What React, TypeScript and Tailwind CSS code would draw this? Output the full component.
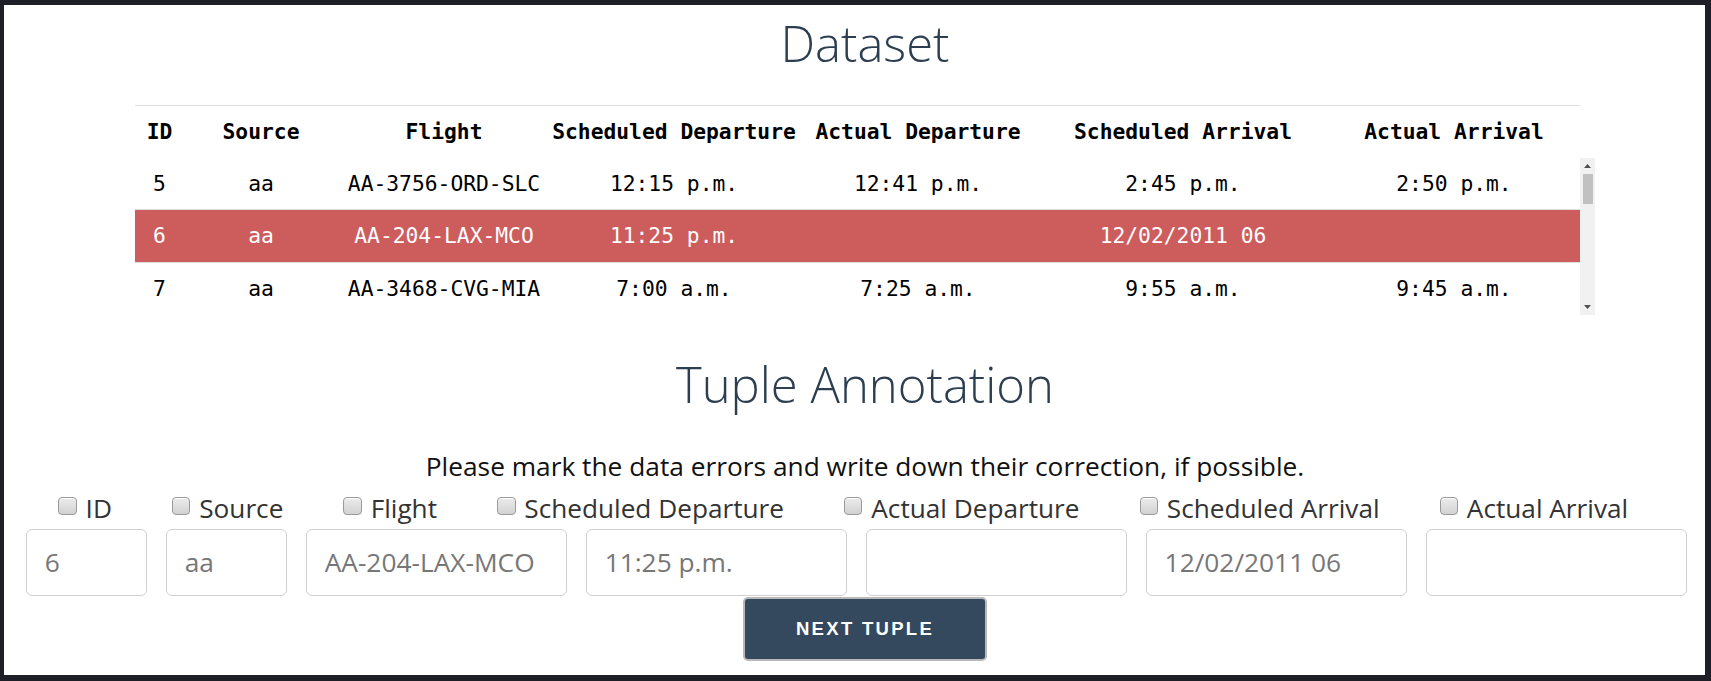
import clsx from "clsx"

const headers = [
  "ID",
  "Source",
  "Flight",
  "Scheduled Departure",
  "Actual Departure",
  "Scheduled Arrival",
  "Actual Arrival",
]

const rows = [
  { cells: ["5", "aa", "AA-3756-ORD-SLC", "12:15 p.m.", "12:41 p.m.", "2:45 p.m.", "2:50 p.m."], active: false },
  { cells: ["6", "aa", "AA-204-LAX-MCO", "11:25 p.m.", "", "12/02/2011 06", ""], active: true },
  { cells: ["7", "aa", "AA-3468-CVG-MIA", "7:00 a.m.", "7:25 a.m.", "9:55 a.m.", "9:45 a.m."], active: false },
]

const fields = [
  { label: "ID", value: "6", wide: false },
  { label: "Source", value: "aa", wide: false },
  { label: "Flight", value: "AA-204-LAX-MCO", wide: true },
  { label: "Scheduled Departure", value: "11:25 p.m.", wide: true },
  { label: "Actual Departure", value: "", wide: true },
  { label: "Scheduled Arrival", value: "12/02/2011 06", wide: true },
  { label: "Actual Arrival", value: "", wide: true },
]

const cols = "grid grid-cols-[49px_154px_212px_248px_240px_290px_252px] items-center"

function ScrollArrow({ down }: { down?: boolean }) {
  return (
    <div className="h-[16px] w-full flex items-center justify-center">
      <svg width="7" height="4" viewBox="0 0 7 4">
        <path d={down ? "M0 0H7L3.5 4Z" : "M3.5 0L7 4H0Z"} fill="#505050" />
      </svg>
    </div>
  )
}

export default function App() {
  return (
    <div className="h-[681px] w-full bg-[#1d1e26] pt-[5px] pl-[4px] pr-[6px] pb-[6px]">
      <div className="h-full bg-white font-['Open_Sans',sans-serif] overflow-hidden">
        <div className="ml-[131px] w-[1460px]">
          <h1 className="pt-[13.5px] text-center text-[49px] leading-[49px] font-light text-[#2c3e50]">Dataset</h1>

          <div className="mt-[37.5px] font-['DejaVu_Sans_Mono',monospace] text-[21.3px] text-black">
            <div className={clsx(cols, "w-[1445px] h-[53px] border-t border-[#dddddd] font-bold")}>
              {headers.map((h) => (
                <div key={h} className="text-center whitespace-nowrap">{h}</div>
              ))}
            </div>
            <div className="flex h-[157px]">
              <div className="w-[1445px]">
                {rows.map((row, i) => (
                  <div
                    key={i}
                    className={clsx(
                      cols,
                      i === 0 ? "h-[51px]" : "h-[53px] border-t border-[#dddddd]",
                      row.active && "bg-[#cd5c5c] text-white"
                    )}
                  >
                    {row.cells.map((c, j) => (
                      <div key={j} className="text-center whitespace-nowrap">{c}</div>
                    ))}
                  </div>
                ))}
              </div>
              <div className="w-[15px] bg-[#f1f1f1] flex flex-col items-center">
                <ScrollArrow />
                <div className="w-[10px] h-[30px] bg-[#c1c1c1]" />
                <div className="flex-1" />
                <ScrollArrow down />
              </div>
            </div>
          </div>

          <h2 className="mt-[44.75px] text-center text-[49px] leading-[49px] font-light text-[#2c3e50]">Tuple Annotation</h2>
          <p className="mt-[39.65px] text-center text-[26.3px] leading-[36px] text-[#111]">
            Please mark the data errors and write down their correction, if possible.
          </p>
        </div>

        <div className="mt-[5.65px] pl-[54.3px] flex gap-[60px] text-[26.2px] leading-[36px] text-[#333]">
          {fields.map((f) => (
            <label key={f.label} className="flex items-center gap-[8.8px] whitespace-nowrap">
              <input
                type="checkbox"
                className="appearance-none mb-[4px] w-[18.5px] h-[18.5px] rounded-[4px] border border-[#9a9a9a] bg-gradient-to-b from-[#ececec] to-[#d2d2d2] shadow-[inset_0_1px_0_#ffffff]"
              />
              <span>{f.label}</span>
            </label>
          ))}
        </div>

        <div className="mt-[3.25px] pl-[21.7px] flex gap-[18.4px]">
          {fields.map((f) => (
            <input
              key={f.label}
              readOnly
              defaultValue={f.value}
              className={clsx(
                "h-[66.4px] rounded-[6px] border-[1.5px] border-[#d0d0d0] px-[18px] text-[26.3px] text-[#777777] outline-none",
                f.wide ? "w-[261.6px]" : "w-[121.6px]"
              )}
            />
          ))}
        </div>

        <div className="ml-[131px] w-[1460px] mt-[1px] flex justify-center">
          <button className="w-[244.6px] h-[64.3px] rounded-[5px] border-2 border-[#b8b8b8] bg-[#34495e] text-white font-bold uppercase tracking-[2.3px] text-[18.5px] font-['Liberation_Sans',Arial,sans-serif]">
            Next Tuple
          </button>
        </div>
      </div>
    </div>
  )
}
